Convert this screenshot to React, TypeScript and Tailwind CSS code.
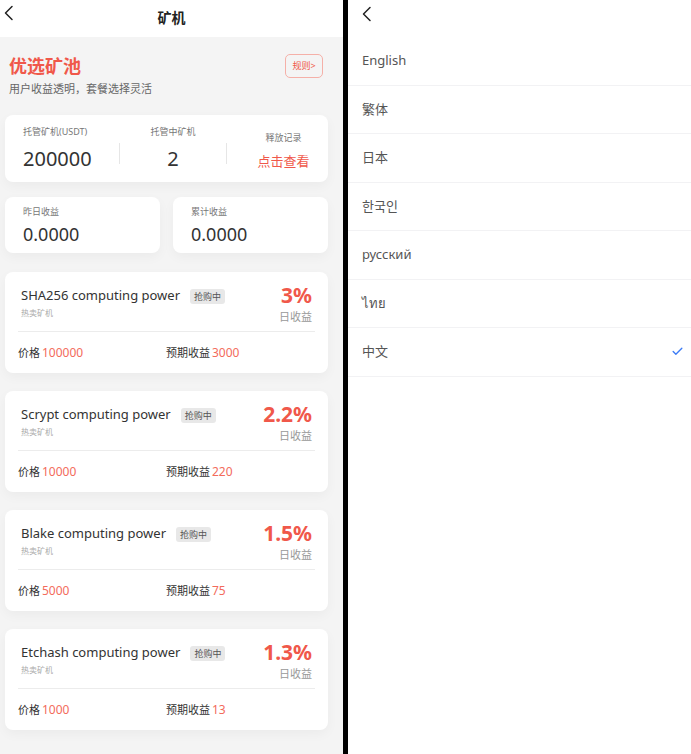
import { Check } from "lucide-react";

const FONT = "font-['Noto_Sans','Noto_Sans_CJK_SC',sans-serif]";

const machines = [
  { name: "SHA256 computing power", rate: "3%", price: "100000", income: "3000" },
  { name: "Scrypt computing power", rate: "2.2%", price: "10000", income: "220" },
  { name: "Blake computing power", rate: "1.5%", price: "5000", income: "75" },
  { name: "Etchash computing power", rate: "1.3%", price: "1000", income: "13" },
];

const languages = ["English", "繁体", "日本", "한국인", "русский", "ไทย", "中文"];

const BackArrow = () => (
  <svg width="11" height="16" viewBox="0 0 11 16" fill="none">
    <path d="M9 1.5 2.5 8 9 14.5" stroke="#222" strokeWidth="1.5" strokeLinecap="round" strokeLinejoin="round" />
  </svg>
);

const MachineCard = ({ m }: { m: (typeof machines)[number] }) => (
  <div className="ml-[5px] w-[323px] h-[101px] bg-white rounded-[8px] shadow-[0_4px_12px_rgba(0,0,0,0.04)] flex flex-col">
    <div className="flex justify-between pl-[16px] pr-[16px] pt-[13px] h-[59px]">
      <div className="flex flex-col">
        <div className="flex items-center gap-[10px] h-[22px]">
          <span className="text-[13px] text-[#333]">{m.name}</span>
          <span className="text-[9px] text-[#555] bg-[#e8e8e8] rounded-[3px] px-[4px] h-[15px] leading-[15px]">抢购中</span>
        </div>
        <span className="text-[8px] text-[#aaa] leading-[10px] mt-[1px]">热卖矿机</span>
      </div>
      <div className="flex flex-col items-end">
        <span className="text-[21px] leading-[20px] font-bold text-[#f0584a]">{m.rate}</span>
        <span className="text-[11px] text-[#999] leading-[14px] mt-[5px]">日收益</span>
      </div>
    </div>
    <div className="mx-[13px] h-px bg-[#ececec]" />
    <div className="flex items-center h-[41px] pl-[13px]">
      <div className="w-[148px] flex items-baseline gap-[2px]">
        <span className="text-[11px] text-[#333]">价格</span>
        <span className="text-[12px] text-[#f36b5c]">{m.price}</span>
      </div>
      <div className="flex items-baseline gap-[2px]">
        <span className="text-[11px] text-[#333]">预期收益</span>
        <span className="text-[12px] text-[#f36b5c]">{m.income}</span>
      </div>
    </div>
  </div>
);

export default function App() {
  return (
    <div className={`flex w-[691px] h-[754px] overflow-hidden ${FONT}`}>
      {/* miner page */}
      <div className="w-[343px] h-full bg-[#f4f4f4] flex flex-col">
        <div className="h-[37px] bg-white relative flex items-center justify-center pb-[3px]">
          <div className="absolute left-[3px] top-[5px]">
            <BackArrow />
          </div>
          <span className="text-[14px] font-bold text-[#222]">矿机</span>
        </div>

        <div className="flex justify-between pl-[9px] pr-[20px] pt-[17px] h-[78px]">
          <div className="flex flex-col">
            <span className="text-[18px] leading-[24px] font-bold text-[#f0584a]">优选矿池</span>
            <span className="text-[11px] text-[#666] mt-[3px]">用户收益透明，套餐选择灵活</span>
          </div>
          <div className="w-[38px] h-[24px] border border-[#f5b0a8] rounded-[5px] flex items-center justify-center text-[9px] text-[#f0584a]">
            规则&gt;
          </div>
        </div>

        <div className="ml-[5px] w-[323px] h-[67px] bg-white rounded-[8px] shadow-[0_4px_12px_rgba(0,0,0,0.04)] flex items-center">
          <div className="w-[114px] pl-[18px] flex flex-col">
            <span className="text-[9px] text-[#777] leading-[12px]">托管矿机(USDT)</span>
            <span className="text-[20px] text-[#333] leading-[26px] mt-[8px]">200000</span>
          </div>
          <div className="w-px h-[21px] bg-[#e6e6e6] mt-[10px]" />
          <div className="w-[106px] flex flex-col items-center">
            <span className="text-[9px] text-[#777] leading-[12px]">托管中矿机</span>
            <span className="text-[20px] text-[#333] leading-[26px] mt-[8px]">2</span>
          </div>
          <div className="w-px h-[21px] bg-[#e6e6e6] mt-[10px]" />
          <div className="flex-1 pl-[12px] flex flex-col items-center">
            <span className="text-[9px] text-[#777] leading-[12px] mt-[4px]">释放记录</span>
            <span className="text-[13px] text-[#f0584a] leading-[18px] mt-[8px]">点击查看</span>
          </div>
        </div>

        <div className="ml-[5px] w-[323px] flex gap-[13px] mt-[15px]">
          {["昨日收益", "累计收益"].map((t) => (
            <div key={t} className="flex-1 h-[56px] bg-white rounded-[8px] shadow-[0_4px_12px_rgba(0,0,0,0.04)] pl-[18px] pt-[9px] flex flex-col">
              <span className="text-[9px] text-[#777] leading-[12px]">{t}</span>
              <span className="text-[18px] text-[#333] leading-[24px] mt-[4px]">0.0000</span>
            </div>
          ))}
        </div>

        <div className="flex flex-col gap-[18px] mt-[19px]">
          {machines.map((m) => (
            <MachineCard key={m.name} m={m} />
          ))}
        </div>
      </div>

      <div className="w-[5px] h-full bg-black" />

      {/* language page */}
      <div className="w-[343px] h-full bg-white flex flex-col">
        <div className="h-[37px] relative">
          <div className="absolute left-[13px] top-[6px]">
            <BackArrow />
          </div>
        </div>
        {languages.map((l) => (
          <div key={l} className="h-[48.5px] border-b border-[#f2f2f4] flex items-center justify-between pl-[14px] pr-[7px]">
            <span className="text-[13px] text-[#555]">{l}</span>
            {l === "中文" && <Check size={13} strokeWidth={2.5} className="text-[#3d7cf5]" />}
          </div>
        ))}
      </div>
    </div>
  );
}
